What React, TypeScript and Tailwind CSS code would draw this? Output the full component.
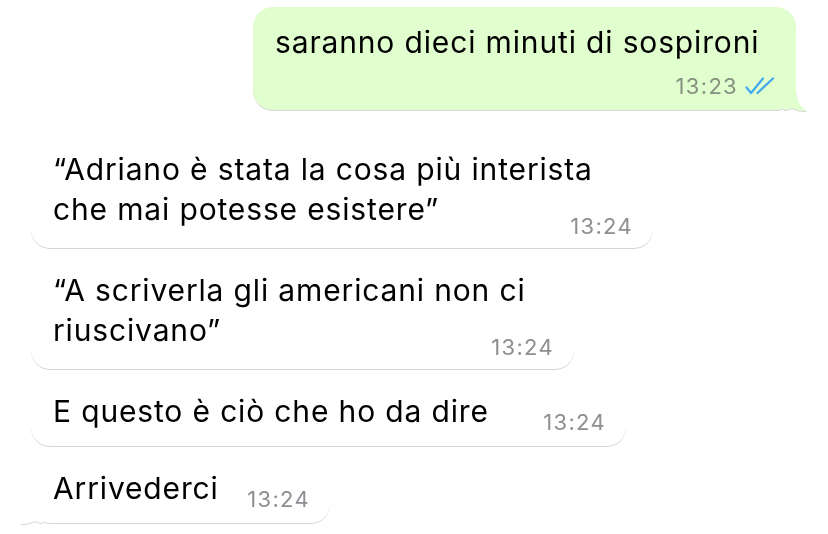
function Tail({ color, flip }: { color: string; flip?: boolean }) {
  return (
    <svg
      width="24"
      height="32"
      viewBox="0 0 24 32"
      className={`absolute bottom-[-2px] ${flip ? 'left-[-12px] -scale-x-100' : 'right-[-12px]'}`}
    >
      <path d="M0 0 L12 0 L12 8 C12 20 16 27 23 31 C17 31.5 12 30 8 28 C5 29.5 2 30 0 30 Z" fill={color} />
    </svg>
  );
}

function Checks() {
  return (
    <svg width="30" height="18" viewBox="0 0 30 18" className="ml-[7px] mt-[3px]">
      <path d="M1.5 10.5 L6 16 L18 1.5" fill="none" stroke="#41a8ef" strokeWidth="2.2" strokeLinecap="round" strokeLinejoin="round" />
      <path d="M12.5 16 L28 1.5" fill="none" stroke="#41a8ef" strokeWidth="2.2" strokeLinecap="round" />
    </svg>
  );
}

function Time({ t, className = '' }: { t: string; className?: string }) {
  return (
    <span className={`block text-[22px] leading-[24px] tracking-[1.3px] text-[#8e8e93] whitespace-nowrap ${className}`}>
      {t}
    </span>
  );
}

function Received({ width, lines, last }: { width: string; lines: string[]; last?: boolean }) {
  const head = lines.slice(0, -1);
  const tail = lines[lines.length - 1];
  const multi = lines.length > 1;
  return (
    <div
      className={`relative ${width} rounded-[19px] bg-white pl-[22px] pr-[20px] pt-[15px] ${
        multi ? 'pb-[10px]' : 'pb-[12px]'
      } drop-shadow-[0_1px_0.6px_rgba(0,0,0,0.16)]`}
    >
      {head.map((l) => (
        <p key={l} className="leading-[40px] whitespace-nowrap">{l}</p>
      ))}
      <div className="flex items-start justify-between">
        <span className="leading-[40px] whitespace-nowrap">{tail}</span>
        <Time t="13:24" className={multi ? 'mt-[25px]' : 'mt-[19px]'} />
      </div>
      {last && <Tail color="#ffffff" flip />}
    </div>
  );
}

export default function App() {
  return (
    <div className="w-[828px] h-[534px] overflow-hidden bg-white text-[30px] leading-[40px] tracking-[0.85px] text-black font-['Inter','Noto_Sans',sans-serif]">
      <div className="flex justify-end pt-[7px] pr-[32px]">
        <div className="relative w-[543px] rounded-[20px] bg-[#e1fecf] pl-[22px] pr-[21px] pt-[15px] pb-[12px] drop-shadow-[0_1px_0.6px_rgba(0,0,0,0.16)]">
          <p className="leading-[40px] whitespace-nowrap">saranno dieci minuti di sospironi</p>
          <div className="mt-[12px] flex items-start justify-end">
            <Time t="13:23" className="text-[#86907f]" />
            <Checks />
          </div>
          <Tail color="#e1fecf" />
        </div>
      </div>
      <div className="mt-[24px] flex flex-col items-start gap-[7px] pl-[31px]">
        <Received width="w-[622px]" lines={['“Adriano è stata la cosa più interista', 'che mai potesse esistere”']} />
        <Received width="w-[543px]" lines={['“A scriverla gli americani non ci', 'riuscivano”']} />
        <Received width="w-[595px]" lines={['E questo è ciò che ho da dire']} />
        <Received width="w-[299px]" lines={['Arrivederci']} last />
      </div>
    </div>
  );
}
